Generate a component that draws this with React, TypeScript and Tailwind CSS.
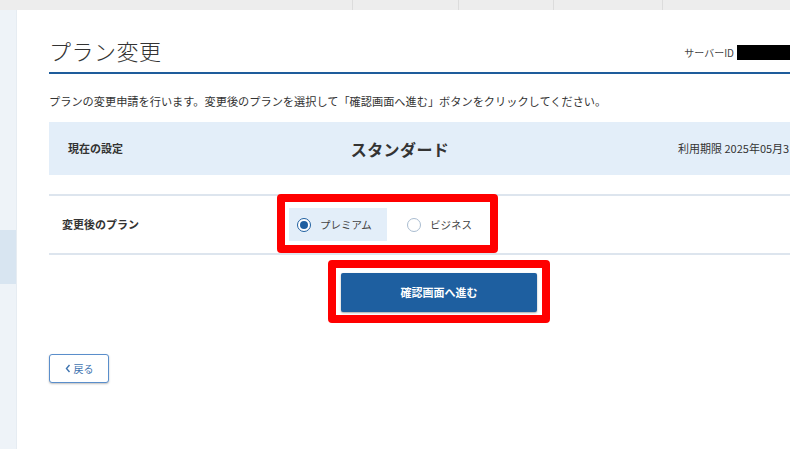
import React from 'react';

const font = { fontFamily: '"Noto Sans CJK JP", "Noto Sans", sans-serif' };

function Radio({ checked }: { checked: boolean }) {
  return (
    <span
      className={
        'flex h-[14px] w-[14px] shrink-0 items-center justify-center rounded-full border-[1.5px] bg-white ' +
        (checked ? 'border-[#1f5fa0]' : 'border-[#a9bcd0]')
      }
    >
      {checked && <span className="h-[8px] w-[8px] rounded-full bg-[#1f5fa0]" />}
    </span>
  );
}

export default function App() {
  return (
    <div className="flex h-[449px] w-[790px] flex-col overflow-hidden bg-white text-[#333]" style={font}>
      {/* top tabs strip */}
      <div className="flex h-[10px] shrink-0 bg-[#ededed]">
        <div className="w-[352px]" />
        <div className="w-[106px] border-l border-[#dcdcdc]" />
        <div className="w-[95px] border-l border-[#dcdcdc]" />
        <div className="w-[109px] border-l border-[#dcdcdc]" />
        <div className="flex-1 border-l border-[#dcdcdc]" />
      </div>

      <div className="flex flex-1">
        {/* sidebar */}
        <div className="w-[17px] shrink-0 border-r border-[#e6ecf2] bg-[#eef3f8] pt-[220px]">
          <div className="h-[54px] bg-[#d8e5f1]" />
        </div>

        {/* main */}
        <div className="w-[780px] shrink-0 pl-[32px]">
          <div className="w-[780px]">
            <div className="mt-[24px] flex items-center justify-between border-b-2 border-[#1e5c9b] pb-[6px]">
              <h1 className="text-[22px] font-light leading-[32px] tracking-[0.5px]">プラン変更</h1>
              <div className="flex items-center pt-[4px]">
                <span className="text-[10px] leading-[15px] text-[#444]">サーバーID</span>
                <span className="ml-[3px] h-[15px] w-[92px] bg-black" />
              </div>
            </div>

            <p className="mt-[19px] text-[11.2px] leading-[16px]">
              プランの変更申請を行います。変更後のプランを選択して「確認画面へ進む」ボタンをクリックしてください。
            </p>

            {/* current setting */}
            <div className="mt-[13px] flex h-[53px] items-center bg-[#e3eef9] pl-[19px]">
              <div className="w-[200px] text-[11px] font-bold">現在の設定</div>
              <div className="w-[264px] text-center text-[16px] font-bold tracking-[0.4px]">スタンダード</div>
              <div className="ml-[146px] whitespace-nowrap text-[11px]">利用期限 2025年05月31日</div>
            </div>

            {/* new plan row */}
            <div className="mt-[19px] flex h-[61px] items-start border-y-2 border-[#dde5ee]">
              <div className="flex h-[57px] w-[228px] items-center pl-[13px] text-[11px] font-bold">変更後のプラン</div>
              <div className="-mt-[2px] flex h-[59px] w-[221px] rounded-[4px] border-[8px] border-[#ff0000] bg-white pl-[4px] pt-[6px]">
                <label className="flex h-[33px] w-[98px] items-center gap-[9px] bg-[#e3eef9] pl-[8px] text-[10.5px] text-[#444]">
                  <Radio checked />
                  プレミアム
                </label>
                <label className="ml-[12px] flex h-[33px] items-center gap-[9px] pl-[8px] text-[10.5px] text-[#444]">
                  <Radio checked={false} />
                  ビジネス
                </label>
              </div>
            </div>

            <div className="mt-[5px] flex justify-center">
              <div className="rounded-[4px] border-[8px] border-[#ff0000] bg-white px-[5px] pb-[3px] pt-[5px]">
                <button className="h-[39px] w-[196px] rounded-[2px] bg-[#1e5fa0] text-[11px] font-bold text-white shadow-[0_1px_2px_rgba(0,0,0,0.35)]">
                  確認画面へ進む
                </button>
              </div>
            </div>

            <button className="mt-[31px] flex h-[29px] w-[60px] items-center justify-center gap-[3px] rounded-[3px] border border-[#5a8ecb] bg-white text-[10px] text-[#3f74b0] shadow-[0_1px_2px_rgba(0,0,0,0.25)]">
              <svg width="6" height="9" viewBox="0 0 6 9" fill="none">
                <path d="M4.5 1 1.5 4.5 4.5 8" stroke="#3f74b0" strokeWidth="1.4" />
              </svg>
              戻る
            </button>
          </div>
        </div>
      </div>
    </div>
  );
}
